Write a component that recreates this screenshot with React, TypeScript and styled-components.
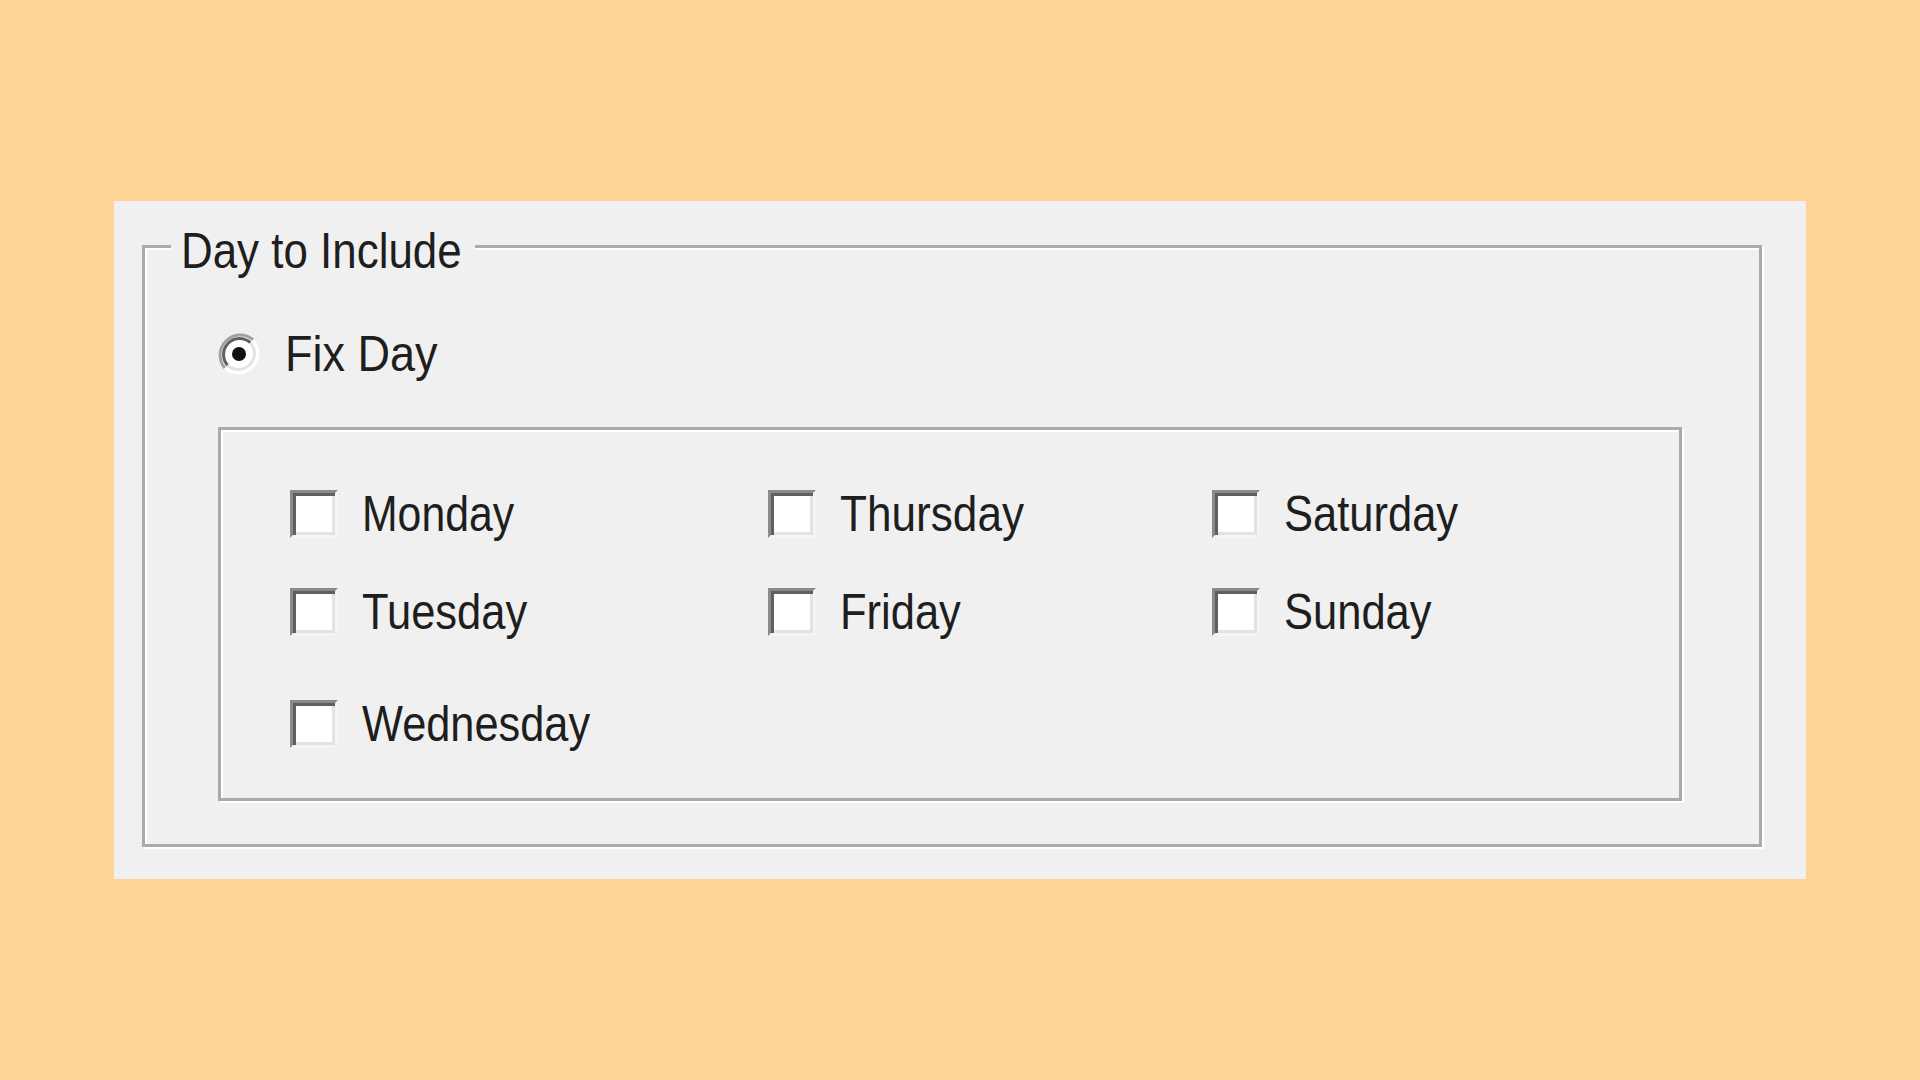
import styled, { createGlobalStyle } from "styled-components";

const GlobalStyle = createGlobalStyle`
  html, body {
    margin: 0;
    background: #fed594;
  }
  body {
    font-family: "Liberation Sans", Arial, sans-serif;
  }
`;

const Page = styled.div`
  width: 1920px;
  height: 1080px;
  box-sizing: border-box;
  padding: 201px 0 0 114px;
`;

const Panel = styled.div`
  width: 1692px;
  height: 678px;
  box-sizing: border-box;
  padding: 44px 0 0 28px;
  background: #f0f0f0;
`;

// etched look: grey line with a white line offset down/right
const Etched = styled.div`
  box-sizing: border-box;
  border: 3px solid #ababab;
  box-shadow: inset 2px 2px 0 #ffffff, 2px 2px 0 #ffffff;
`;

const GroupBox = styled(Etched)`
  position: relative;
  width: 1620px;
  height: 602px;
  padding: 84px 0 0 72px;
`;

const Legend = styled.div`
  position: absolute;
  top: -22px;
  left: 26px;
  width: 304px;
  height: 50px;
  box-sizing: border-box;
  padding-left: 10px;
  background: #f0f0f0;
  display: flex;
  align-items: center;
`;

// the WinForms font is tall and narrow, so squeeze Liberation Sans a little
const Label = styled.span<{ $squeeze?: number }>`
  display: inline-block;
  font-size: 50px;
  line-height: 1;
  color: #1e1e1e;
  white-space: nowrap;
  transform: scaleX(${(p) => p.$squeeze ?? 0.87});
  transform-origin: left center;
`;

const RadioRow = styled.label`
  display: flex;
  align-items: center;
  gap: 24px;
  height: 44px;
`;

const DaysBox = styled(Etched)`
  width: 1464px;
  height: 374px;
  margin: 51px 0 0 1px;
  padding: 60px 0 0 69px;
  display: grid;
  grid-template-columns: 478px 444px 1fr;
  grid-template-rows: 98px 112px 48px;
  grid-auto-flow: column;
  align-items: start;
`;

const DayItem = styled.label<{ $row?: number }>`
  display: flex;
  align-items: center;
  gap: 24px;
  height: 48px;
  grid-row: ${(p) => p.$row ?? "auto"};
`;

const Box = styled.span`
  width: 48px;
  height: 48px;
  box-sizing: border-box;
  flex: none;
  background: #ffffff;
  border: 3px solid;
  border-color: #8a8a8a #f4f4f4 #f4f4f4 #8a8a8a;
  box-shadow: inset 3px 3px 0 #5f5f5f, inset -3px -3px 0 #e3e3e3;
`;

const Radio = () => (
  <svg width="44" height="44" viewBox="0 0 44 44">
    <circle cx="22" cy="22" r="20" fill="#ffffff" />
    <path d="M36.1 7.9 A20 20 0 0 0 7.9 36.1" fill="none" stroke="#a0a0a0" strokeWidth="3" />
    <path d="M33.3 10.7 A16 16 0 0 0 10.7 33.3" fill="none" stroke="#5f5f5f" strokeWidth="3" />
    <path d="M7.9 36.1 A20 20 0 0 0 36.1 7.9" fill="none" stroke="#ffffff" strokeWidth="3" />
    <path d="M10.7 33.3 A16 16 0 0 0 33.3 10.7" fill="none" stroke="#e3e3e3" strokeWidth="3" />
    <circle cx="22" cy="22" r="7" fill="#111111" />
  </svg>
);

const days: { name: string; squeeze: number }[] = [
  { name: "Monday", squeeze: 0.855 },
  { name: "Tuesday", squeeze: 0.87 },
  { name: "Wednesday", squeeze: 0.867 },
  { name: "Thursday", squeeze: 0.883 },
  { name: "Friday", squeeze: 0.87 },
  { name: "Saturday", squeeze: 0.87 },
  { name: "Sunday", squeeze: 0.87 },
];

const App = () => {
  return (
    <>
      <GlobalStyle />
      <Page>
        <Panel>
          <GroupBox>
            <Legend>
              <Label $squeeze={0.878}>Day to Include</Label>
            </Legend>
            <RadioRow>
              <Radio />
              <Label $squeeze={0.9}>Fix Day</Label>
            </RadioRow>
            <DaysBox>
              {days.map((d, i) => (
                <DayItem key={d.name} $row={i < 3 ? i + 1 : i < 5 ? i - 2 : i - 4}>
                  <Box />
                  <Label $squeeze={d.squeeze}>{d.name}</Label>
                </DayItem>
              ))}
            </DaysBox>
          </GroupBox>
        </Panel>
      </Page>
    </>
  );
};

export default App;
